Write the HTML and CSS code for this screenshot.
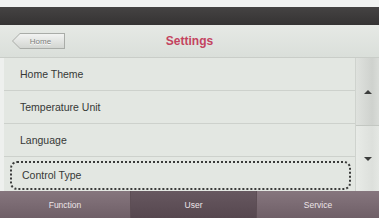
FILE: index.html
```html
<!DOCTYPE html>
<html lang="en">
<head>
  <meta charset="UTF-8" />
  <title>Settings</title>
  <link rel="stylesheet" href="styles.css">
</head>
<body>
  <div class="screen">
    <div class="status"></div>
    <div class="topbar"></div>
    <div class="header">
      <div class="home-btn"><span class="home-inner">Home</span></div>
      <h1 class="title">Settings</h1>
    </div>
    <div class="main">
      <ul class="list">
        <li class="row">Home Theme</li>
        <li class="row">Temperature Unit</li>
        <li class="row">Language</li>
        <li class="row focused"><span class="focus-box">Control Type</span></li>
      </ul>
      <div class="scroll">
        <div class="scroll-up"><span class="arrow up"></span></div>
        <div class="scroll-down"><span class="arrow down"></span></div>
      </div>
    </div>
    <div class="tabs">
      <div class="tab">Function</div>
      <div class="tab active">User</div>
      <div class="tab">Service</div>
    </div>
  </div>
</body>
</html>
```

FILE: styles.css
```css
body {
  margin: 0;
  font-family: "Liberation Sans", Arial, sans-serif;
  background: #e4e8e3;
}

.screen {
  width: 379px;
  height: 218px;
  display: flex;
  flex-direction: column;
  overflow: hidden;
}

.status {
  height: 7px;
  background: #f1f2f1;
}

.topbar {
  height: 18px;
  background: linear-gradient(#454343, #353333);
}

.header {
  height: 33px;
  display: flex;
  align-items: center;
  position: relative;
  background: linear-gradient(#e6e9e5, #dadfda);
  border-bottom: 1px solid #c9cdc8;
  box-sizing: border-box;
}

.home-btn {
  margin-left: 12px;
  width: 53px;
  height: 16px;
  padding: 1px;
  box-sizing: border-box;
  background: #a9aca8;
  clip-path: polygon(8px 0, 100% 0, 100% 100%, 8px 100%, 0 50%);
}

.home-inner {
  display: flex;
  align-items: center;
  justify-content: center;
  height: 100%;
  padding-left: 4px;
  box-sizing: border-box;
  background: linear-gradient(#f2f3f2, #d3d6d2);
  clip-path: polygon(7px 0, 100% 0, 100% 100%, 7px 100%, 0 50%);
  font-size: 8px;
  color: #7d807c;
  text-shadow: 0 1px 0 #fff;
}

.title {
  position: absolute;
  left: 0;
  right: 0;
  margin: 0;
  text-align: center;
  font-size: 12px;
  font-weight: bold;
  color: #c4435f;
  pointer-events: none;
}

.main {
  flex: 1;
  display: flex;
}

.list {
  flex: 1;
  margin: 0;
  padding: 0;
  list-style: none;
  background: #e3e7e2;
  border-left: 4px solid #eef0ee;
}

.row {
  height: 32px;
  display: flex;
  align-items: center;
  padding-left: 16px;
  font-size: 10.5px;
  color: #363836;
  border-bottom: 1px solid #cdd1cc;
}

.row.focused {
  border-bottom: none;
  padding: 2px 0 0 6px;
}

.focus-box {
  flex: 1;
  height: 25px;
  display: flex;
  align-items: center;
  padding-left: 10px;
  margin-right: 4px;
  border: 2px dotted #3a3b3a;
  border-radius: 7px;
}

.scroll {
  width: 23px;
  display: flex;
  flex-direction: column;
  border-left: 1px solid #cfd3ce;
}

.scroll-up {
  height: 67px;
  display: flex;
  align-items: center;
  justify-content: center;
  background: linear-gradient(90deg, #dfe2de, #cfd2ce 70%, #d9dcd8);
  border-bottom: 1px solid #c3c7c2;
}

.scroll-down {
  flex: 1;
  display: flex;
  align-items: center;
  justify-content: center;
  background: linear-gradient(90deg, #e8ebe7, #dde0dc 70%, #e4e7e3);
}

.arrow {
  width: 0;
  height: 0;
  border-left: 4px solid transparent;
  border-right: 4px solid transparent;
}

.arrow.up {
  border-bottom: 4px solid #3c3d3c;
}

.arrow.down {
  border-top: 4px solid #3c3d3c;
}

.tabs {
  height: 27px;
  display: flex;
  background: linear-gradient(#86767e, #6f5f67);
}

.tab {
  width: 130px;
  display: flex;
  align-items: center;
  justify-content: center;
  font-size: 8.5px;
  color: #ece4e8;
  border-right: 1px solid #5d4e55;
}

.tab:last-child {
  flex: 1;
  border-right: none;
}

.tab.active {
  width: 125px;
  background: linear-gradient(#675860, #56474f);
}
```
